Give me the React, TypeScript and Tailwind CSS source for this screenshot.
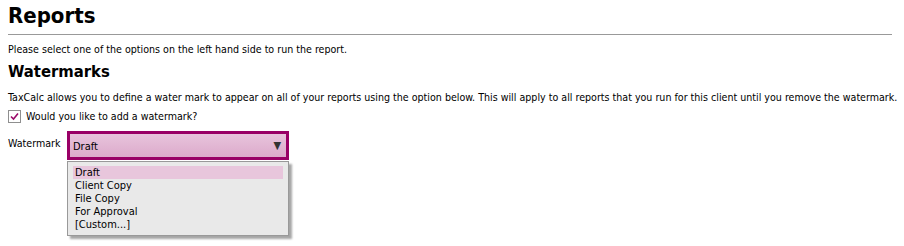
import React from 'react';

const options = ['Draft', 'Client Copy', 'File Copy', 'For Approval', '[Custom...]'];

export default function App() {
  return (
    <div className="w-[904px] h-[246px] bg-white text-black px-2 font-['DejaVu_Sans_Condensed','DejaVu_Sans',sans-serif] text-[10.6px]">
      <h1 className="text-[22px] font-bold leading-[28px] pt-[2px] pb-[4px] border-b border-[#999999] mr-[4px]">Reports</h1>
      <p className="mt-[7px] leading-[14px]">Please select one of the options on the left hand side to run the report.</p>
      <h2 className="text-[16.5px] font-bold leading-[22px] mt-[5px]">Watermarks</h2>
      <p className="mt-[7px] leading-[14px] whitespace-nowrap">
        TaxCalc allows you to define a water mark to appear on all of your reports using the option below. This will apply to all reports that you run for this client until you remove the watermark.
      </p>
      <label className="flex items-center gap-[5px] mt-[5px] leading-[14px]">
        <span className="w-[13px] h-[13px] border border-[#8f8f8f] bg-white flex items-center justify-center">
          <svg width="9" height="9" viewBox="0 0 9 9">
            <path d="M1 4.5 L3.5 7 L8 1.5" stroke="#9b0a6a" strokeWidth="1.6" fill="none" />
          </svg>
        </span>
        Would you like to add a watermark?
      </label>
      <div className="flex items-start mt-[8px]">
        <span className="w-[59px] leading-[14px] pt-[5px]">Watermark</span>
        <div className="relative w-[222px]">
          <div className="h-[29px] border-[3px] border-[#990066] bg-gradient-to-b from-[#e8c4dc] to-[#dcaacb] flex items-center justify-between pl-[3px] pr-[5px]">
            <span className="pt-[3px] text-[11px]">Draft</span>
            <span className="text-[11px] text-[#333333] leading-none">▼</span>
          </div>
          <div className="absolute left-0 top-[30px] w-[222px] bg-[#e9e9e9] border border-[#999999] shadow-[3px_3px_2px_rgba(0,0,0,0.35)] px-[5px] pt-[4px] pb-[4px]">
            {options.map((o, i) => (
              <div key={o} className={`leading-[13px] px-[2px] text-[11px] ${i === 0 ? 'bg-[#e8c6dc]' : ''}`}>{o}</div>
            ))}
          </div>
        </div>
      </div>
    </div>
  );
}
